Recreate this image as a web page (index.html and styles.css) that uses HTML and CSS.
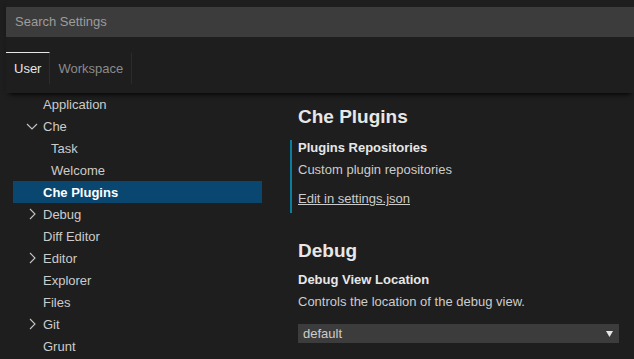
FILE: index.html
```html
<!DOCTYPE html>
<html lang="en">
<head>
    <meta charset="UTF-8">
    <meta name="viewport" content="width=device-width, initial-scale=1.0">
    <title>Settings</title>
    <link rel="stylesheet" href="styles.css">
</head>
<body>

<div class="header">
    <div class="search">Search Settings</div>
    <div class="tabs">
        <div class="tab active">User</div>
        <div class="tab">Workspace</div>
    </div>
</div>

<div class="main">
    <!-- Árbol de categorías -->
    <div class="tree">
        <div class="row"><span class="twistie"></span><span>Application</span></div>
        <div class="row">
            <span class="twistie">
                <svg width="12" height="7" viewBox="0 0 12 7"><path d="M1 1l5 5 5-5" fill="none" stroke="#c5c5c5" stroke-width="1.1"/></svg>
            </span><span>Che</span>
        </div>
        <div class="row child"><span class="twistie"></span><span>Task</span></div>
        <div class="row child"><span class="twistie"></span><span>Welcome</span></div>
        <div class="row selected"><span class="twistie"></span><span>Che Plugins</span></div>
        <div class="row">
            <span class="twistie">
                <svg width="7" height="12" viewBox="0 0 7 12"><path d="M1 1l5 5-5 5" fill="none" stroke="#c5c5c5" stroke-width="1.1"/></svg>
            </span><span>Debug</span>
        </div>
        <div class="row"><span class="twistie"></span><span>Diff Editor</span></div>
        <div class="row">
            <span class="twistie">
                <svg width="7" height="12" viewBox="0 0 7 12"><path d="M1 1l5 5-5 5" fill="none" stroke="#c5c5c5" stroke-width="1.1"/></svg>
            </span><span>Editor</span>
        </div>
        <div class="row"><span class="twistie"></span><span>Explorer</span></div>
        <div class="row"><span class="twistie"></span><span>Files</span></div>
        <div class="row">
            <span class="twistie">
                <svg width="7" height="12" viewBox="0 0 7 12"><path d="M1 1l5 5-5 5" fill="none" stroke="#c5c5c5" stroke-width="1.1"/></svg>
            </span><span>Git</span>
        </div>
        <div class="row"><span class="twistie"></span><span>Grunt</span></div>
    </div>

    <!-- Lista de ajustes -->
    <div class="settings">
        <div class="group-title">Che Plugins</div>
        <div class="item modified">
            <div class="item-title">Plugins Repositories</div>
            <div class="item-desc">Custom plugin repositories</div>
            <a class="item-link" href="#">Edit in settings.json</a>
        </div>

        <div class="group-title second">Debug</div>
        <div class="item">
            <div class="item-title">Debug View Location</div>
            <div class="item-desc">Controls the location of the debug view.</div>
            <div class="dropdown">
                <span>default</span>
                <svg width="7" height="6" viewBox="0 0 7 6"><path d="M0 0h7L3.5 6z" fill="#e8e8e8"/></svg>
            </div>
        </div>
    </div>
</div>

</body>
</html>
```

FILE: styles.css
```css
body {
    margin: 0;
    background-color: #1e1e1e;
    color: #cccccc;
    font-family: "Liberation Sans", Arial, sans-serif;
    font-size: 13px;
    overflow: hidden;
}
.header {
    position: relative;
    z-index: 1;
    margin-left: 6px;
    padding-top: 7px;
    padding-bottom: 9px;
    background-color: #1e1e1e;
    box-shadow: 0 4px 5px -3px #000;
}
.search {
    height: 30px;
    line-height: 30px;
    padding-left: 9px;
    background-color: #3c3c3c;
    color: #9d9d9d;
}
.tabs {
    display: flex;
    margin-top: 15px;
}
.tab {
    height: 31px;
    line-height: 31px;
    padding: 0 8px;
    border-top: 1px solid transparent;
    border-right: 1px solid #2b2b2b;
    color: #8b8b8b;
}
.tab.active {
    border-top-color: #e7e7e7;
    color: #e7e7e7;
}
.main {
    display: flex;
}
.tree {
    width: 249px;
    margin-left: 13px;
    flex-shrink: 0;
}
.row {
    display: flex;
    align-items: center;
    height: 22px;
    padding-left: 11px;
}
.row.child {
    padding-left: 19px;
}
.row.selected {
    background-color: #094771;
    color: #fff;
    font-weight: bold;
}
.twistie {
    display: flex;
    align-items: center;
    justify-content: center;
    width: 16px;
    margin-right: 3px;
}
.settings {
    flex: 1;
    padding-left: 28px;
}
.group-title {
    margin-top: 12px;
    height: 24px;
    line-height: 24px;
    padding-left: 8px;
    font-size: 19px;
    font-weight: bold;
    color: #e7e7e7;
}
.group-title.second {
    margin-top: 26px;
}
.item {
    margin-top: 11px;
    padding-left: 6px;
    padding-bottom: 5px;
    border-left: 2px solid transparent;
}
.group-title.second + .item {
    margin-top: 9px;
}
.item.modified {
    border-left-color: #0c7d9d;
}
.item-title {
    height: 16px;
    line-height: 16px;
    font-weight: bold;
    color: #e7e7e7;
}
.item-desc {
    margin-top: 5px;
    line-height: 18px;
}
.item-link {
    display: block;
    margin-top: 11px;
    line-height: 18px;
    color: #cccccc;
}
.dropdown {
    display: flex;
    align-items: center;
    justify-content: space-between;
    width: 310px;
    height: 19px;
    margin-top: 13px;
    padding: 0 6px 0 5px;
    background-color: #3c3c3c;
}
```
